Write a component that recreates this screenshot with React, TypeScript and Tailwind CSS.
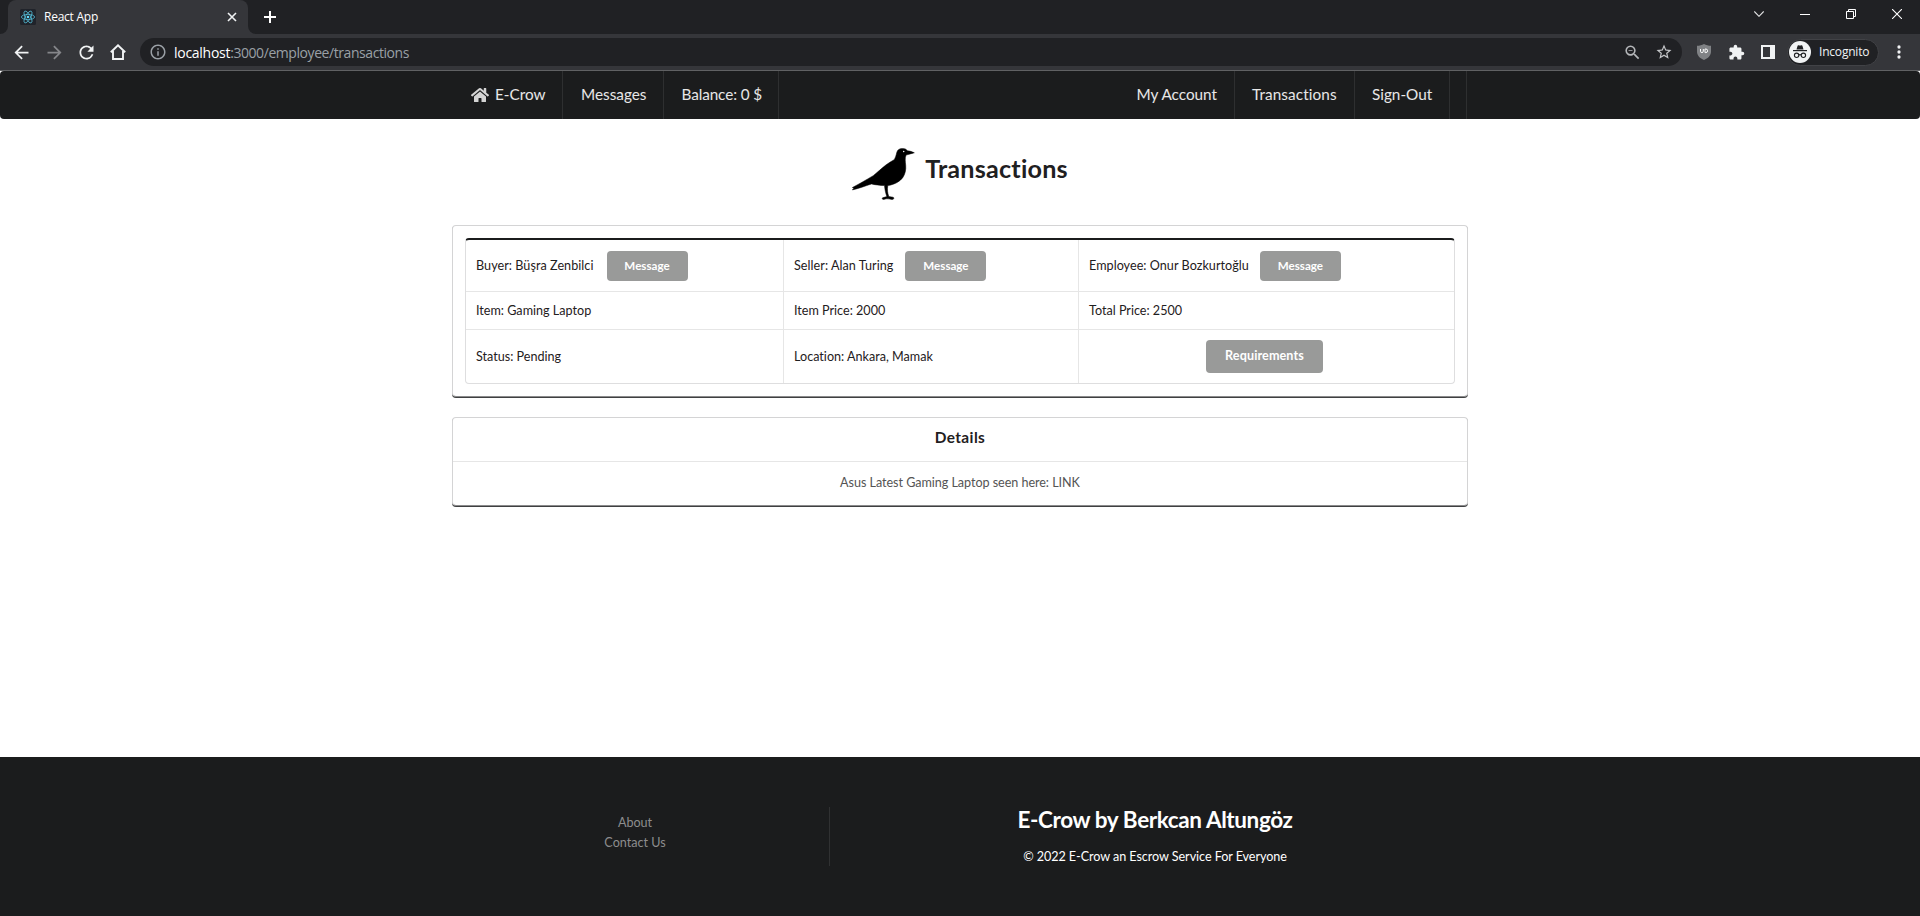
import type { ReactNode } from "react";
import { MdArrowBack, MdArrowForward, MdExtension, MdInfoOutline, MdRefresh, MdStarBorder, MdZoomOut } from "react-icons/md";
import { FaHome } from "react-icons/fa";

function ReactLogo() {
  return (
    <svg viewBox="0 0 16 16" className="size-4 shrink-0">
      <rect width="16" height="16" rx="1.5" fill="#20232a" />
      <g fill="none" stroke="#53b9d3" strokeWidth="0.8">
        <ellipse cx="8" cy="8" rx="6.6" ry="2.6" />
        <ellipse cx="8" cy="8" rx="6.6" ry="2.6" transform="rotate(60 8 8)" />
        <ellipse cx="8" cy="8" rx="6.6" ry="2.6" transform="rotate(120 8 8)" />
      </g>
      <circle cx="8" cy="8" r="1.3" fill="#61dafb" />
    </svg>
  );
}

function TabStrip() {
  return (
    <div className="flex h-[34px] items-stretch bg-[#202124]">
      <div className="flex w-2 items-end bg-[#35363a]">
        <div className="h-full w-2 rounded-br-lg bg-[#202124]" />
      </div>
      <div className="bg-[#202124]">
        <div className="flex h-[34px] w-[240px] items-center rounded-t-lg bg-[#35363a] pl-3 pr-[11px]">
          <ReactLogo />
          <span className="ml-2 flex-1 text-[12px] tracking-[-0.25px] text-white">React App</span>
          <svg viewBox="0 0 10 10" className="size-[10px]" stroke="#f1f3f4" strokeWidth="1.6">
            <path d="M1 1l8 8M9 1l-8 8" />
          </svg>
        </div>
      </div>
      <div className="flex w-2 bg-[#35363a]">
        <div className="h-full w-2 rounded-bl-lg bg-[#202124]" />
      </div>
      <div className="flex flex-1 items-center pl-2">
        <svg viewBox="0 0 12 12" className="size-3" stroke="#ffffff" strokeWidth="2">
          <path d="M6 0v12M0 6h12" />
        </svg>
      </div>
      <div className="flex h-7 items-center gap-[36px] pr-[18px]">
        <svg viewBox="0 0 10 6" className="h-[6px] w-[10px]" fill="none" stroke="#e4e5e6" strokeWidth="1.1">
          <path d="M0.3 0.5L5 5.3 9.7 0.5" />
        </svg>
        <svg viewBox="0 0 10 10" className="size-[10px]" stroke="#ffffff">
          <path d="M0 5.5h10" />
        </svg>
        <svg viewBox="0 0 10 10" className="size-[10px]" fill="none" stroke="#ffffff">
          <path d="M0.5 2.5h7v7h-7zM2.5 2.5v-2h7v7h-2" />
        </svg>
        <svg viewBox="0 0 10 10" className="size-[10px]" stroke="#ffffff" strokeWidth="1.1">
          <path d="M0 0l10 10M10 0L0 10" />
        </svg>
      </div>
    </div>
  );
}

function Toolbar() {
  return (
    <div className="flex h-9 items-center bg-[#35363a] text-[#f1f3f4]">
      <MdArrowBack className="ml-[11px] size-[21px]" />
      <MdArrowForward className="ml-3 size-[21px] text-[#85868a]" />
      <MdRefresh className="ml-[11px] size-[21px]" />
      <svg viewBox="0 0 16 16" className="ml-[13px] size-4" fill="none" stroke="#f1f3f4" strokeWidth="1.9">
        <path d="M0.8 8.3L8 1.3l7.2 7M3 7v8h10V7" />
      </svg>
      <div className="ml-[14px] flex h-7 w-[1542px] items-center rounded-full bg-[#202124]">
        <MdInfoOutline className="ml-[9px] size-[18px] text-[#9aa0a6]" />
        <span className="ml-[7px] pt-px text-[14px] leading-5 tracking-[-0.43px] text-[#9aa0a6]">
          <span className="tracking-[-0.28px] text-white">localhost</span>:3000/employee/transactions
        </span>
        <MdZoomOut className="ml-auto size-[19px] text-[#b5b7ba]" />
        <MdStarBorder className="ml-[13px] mr-[9px] size-[18px] text-[#c4c6c9]" />
      </div>
      <svg viewBox="0 0 14 16" className="ml-[15px] h-4 w-[14px]">
        <path d="M7 0c2 1.2 4.500 1.700 7 1.800v5.700c0 4-3 6.900-7 8.500-4-1.600-7-4.500-7-8.500V1.800C2.500 1.700 5 1.200 7 0z" fill="#808285" />
        <path d="M3.500 5v2.200a1.400 1.400 0 0 0 2.800 0V5M8 5h.8a1.800 1.800 0 0 1 0 3.600H8z" fill="none" stroke="#ffffff" strokeWidth="1" />
      </svg>
      <MdExtension className="ml-[17px] size-[17px]" />
      <svg viewBox="0 0 14 14" className="ml-4 size-[14px]">
        <path fillRule="evenodd" fill="#f1f3f4" d="M0 0h14v14H0zM2 2v10h7V2z" />
      </svg>
      <div className="ml-3 flex h-[27px] w-[92px] items-center rounded-full border border-[#414246] bg-[#202124]">
        <svg viewBox="0 0 22 22" className="ml-px size-[22px]">
          <circle cx="11" cy="11" r="11" fill="#f1f3f4" />
          <path d="M7.500 8.500l1.100-3.700c.2-.6.6-.7 1-.5.900.4 1.900.4 2.800 0 .4-.2.900-.1 1 .5l1.100 3.700z" fill="#202124" />
          <path d="M4 9.600h14" stroke="#202124" strokeWidth="1.200" />
          <g fill="none" stroke="#202124" strokeWidth="1.100">
            <circle cx="7.600" cy="14.300" r="2.200" />
            <circle cx="14.400" cy="14.300" r="2.200" />
            <path d="M9.800 14q1.200-.8 2.400 0" />
          </g>
        </svg>
        <span className="ml-2 text-[12px] tracking-[-0.2px] text-[#f1f3f4]">Incognito</span>
      </div>
      <svg viewBox="0 0 4 14" className="ml-[18px] h-[14px] w-1" fill="#f1f3f4">
        <circle cx="2" cy="2" r="1.650" />
        <circle cx="2" cy="7" r="1.650" />
        <circle cx="2" cy="12" r="1.650" />
      </svg>
    </div>
  );
}

function NavItem({ className, children }: { className: string; children?: ReactNode }) {
  return (
    <a className={`flex items-center border-r border-[#2e2f30] pb-px text-[15.3px] text-white/90 ${className}`}>{children}</a>
  );
}

function NavBar() {
  return (
    <nav className="flex h-12 rounded-[4px] bg-[#1b1c1d] pl-[453px]">
      <NavItem className="w-[110px] pl-[18px]">
        <FaHome className="mr-[6px] size-[18px] text-[#d4d4d4]" />
        E-Crow
      </NavItem>
      <NavItem className="w-[101px] pl-[18px]">Messages</NavItem>
      <NavItem className="w-[115px] pl-[17.5px] tracking-[-0.1px]">Balance: 0 $</NavItem>
      <div className="ml-[340px] flex">
        <NavItem className="w-[116px] justify-end pr-[17px]">My Account</NavItem>
        <NavItem className="w-[120px] pl-[17px] tracking-[0.1px]">Transactions</NavItem>
        <NavItem className="w-[95px] pl-[17px]">Sign-Out</NavItem>
        <NavItem className="w-[17px]" />
      </div>
    </nav>
  );
}

function Crow() {
  return (
    <svg viewBox="66 52 190 156" className="h-[52px] w-[63px]">
      <path
        d="M254 66C247 63 240 60 233 60C230 55 225 53 218 53C209 53 203 57 201 65C199 74 197 81 193 87C184 92 176 97 168 103C155 113 143 125 130 135C110 147 88 160 67 171L72 172L67 178C86 174 106 166 125 160C136 163 150 164 164 165C165 176 167 187 171 198L158 202C156 205 158 207 161 207C166 207 168 204 174 205C180 205 184 208 190 206C193 205 193 201 190 200L177 198C173 187 172 177 174 165C194 162 210 153 219 141C227 129 229 117 228 104C227 93 225 83 229 73C237 70 246 69 254 66Z"
        fill="#000000"
        stroke="#000000"
        strokeWidth="1.5"
      />
      <circle cx="222" cy="62" r="2.2" fill="#ffffff" />
    </svg>
  );
}

function MessageButton() {
  return (
    <button className="h-[30px] w-[81px] rounded-[4px] bg-[#999a99] text-[11.6px] font-bold leading-[30px] text-white">Message</button>
  );
}

function TransactionTable() {
  return (
    <section className="h-[172px] rounded-[4px] border border-[#d4d4d5] border-b-[#8b8b8c] bg-white p-3 shadow-[0_1px_0_0_#3f4041]">
      <div className="grid h-[146px] grid-cols-[318px_295px_1fr] grid-rows-[52px_38px_1fr] overflow-hidden rounded-[4px] border border-t-2 border-[#dededf] border-t-[#1b1c1d] text-[12.6px]">
        <div className="flex items-center gap-[13px] border-b border-r border-[#e6e6e6] pl-[10px]">
          <span className="pt-px tracking-[0.05px]">Buyer: Büşra Zenbilci</span>
          <MessageButton />
        </div>
        <div className="flex items-center gap-3 border-b border-r border-[#e6e6e6] pl-[10px]">
          <span className="pt-px tracking-[0.05px]">Seller: Alan Turing</span>
          <MessageButton />
        </div>
        <div className="flex items-center gap-[11px] border-b border-[#e6e6e6] pl-[10px]">
          <span className="pt-px tracking-[0.04px]">Employee: Onur Bozkurtoğlu</span>
          <MessageButton />
        </div>
        <div className="flex items-center border-b border-r border-[#e6e6e6] pl-[10px] pt-px">Item: Gaming Laptop</div>
        <div className="flex items-center border-b border-r border-[#e6e6e6] pl-[10px] pt-px">Item Price: 2000</div>
        <div className="flex items-center border-b border-[#e6e6e6] pl-[10px] pt-px">Total Price: 2500</div>
        <div className="flex items-center border-r border-[#e6e6e6] pl-[10px] pt-px">Status: Pending</div>
        <div className="flex items-center border-r border-[#e6e6e6] pl-[10px] pt-px">Location: Ankara, Mamak</div>
        <div className="flex items-center pl-[127px]">
          <button className="h-[33px] w-[117px] rounded-[4px] bg-[#999a99] pb-px text-[12.6px] font-bold tracking-[0.1px] text-white">
            Requirements
          </button>
        </div>
      </div>
    </section>
  );
}

function DetailsCard() {
  return (
    <section className="mt-5 h-[89px] rounded-[4px] border border-[#d4d4d5] border-b-[#8b8b8c] bg-white text-center shadow-[0_1px_0_0_#3f4041]">
      <h2 className="flex h-11 items-center justify-center border-b border-[#e6e6e6] pb-[3px] text-[15.4px] font-bold tracking-[0.4px]">Details</h2>
      <p className="pt-3 text-[12.6px] leading-[18px] tracking-[-0.05px] text-[#545454]">Asus Latest Gaming Laptop seen here: LINK</p>
    </section>
  );
}

function Footer() {
  return (
    <footer className="flex h-[159px] items-start bg-[#1b1c1d] pl-[441px] pt-[50px]">
      <div className="flex h-[59px] w-[389px] flex-col items-center border-r border-[#303132] pt-[6px] text-[12.6px] leading-5 text-[#8d8d8e]">
        <a>About</a>
        <a>Contact Us</a>
      </div>
      <div className="flex w-[650px] flex-col items-center text-white">
        <h2 className="text-[22.5px] font-bold leading-[25px] tracking-[-0.39px]">E-Crow by Berkcan Altungöz</h2>
        <p className="mt-4 text-[12.6px] leading-[18px] tracking-[-0.06px]">© 2022 E-Crow an Escrow Service For Everyone</p>
      </div>
    </footer>
  );
}

export default function App() {
  return (
    <div className="flex h-[916px] w-[1920px] flex-col overflow-hidden bg-white [font-variant-ligatures:none]">
      <header className="border-b border-[#606163] font-['Open_Sans',sans-serif]">
        <TabStrip />
        <Toolbar />
      </header>
      <div className="flex flex-1 flex-col font-['Lato',sans-serif] text-[#1f2021]">
        <NavBar />
        <main className="mx-auto w-[1016px] flex-1">
          <div className="flex h-[106px] items-start justify-center gap-[10px] pt-[29px]">
            <Crow />
            <h1 className="text-[25.2px] font-bold leading-[40px] tracking-[0.2px]">Transactions</h1>
          </div>
          <TransactionTable />
          <DetailsCard />
        </main>
        <Footer />
      </div>
    </div>
  );
}
